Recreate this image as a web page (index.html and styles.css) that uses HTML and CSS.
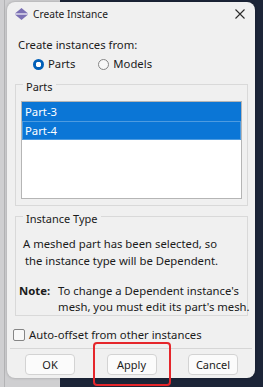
FILE: index.html
```html
<!DOCTYPE html>
<html lang="en">
<head>
  <meta charset="UTF-8">
  <meta name="viewport" content="width=device-width, initial-scale=1.0">
  <title>Create Instance</title>
  <link rel="stylesheet" href="styles.css">
</head>
<body>
  <div class="desktop">
    <div class="strip"></div>
    <div class="dialog">
      <div class="titlebar">
        <svg class="app-icon" width="13" height="12" viewBox="0 0 13 12">
          <path d="M6.5 0 L12.5 5 L0.5 5 Z" fill="#7b70b4"/>
          <path d="M0.5 7 L12.5 7 L6.5 12 Z" fill="#7b70b4"/>
          <rect x="0" y="5.4" width="13" height="1.2" fill="#a9a1d2"/>
        </svg>
        <span class="title">Create Instance</span>
        <svg class="close" width="10" height="10" viewBox="0 0 10 10">
          <path d="M0.5 0.5 L9.5 9.5 M9.5 0.5 L0.5 9.5" stroke="#2b2b2b" stroke-width="1.1"/>
        </svg>
      </div>

      <div class="from-label">Create instances from:</div>
      <div class="radios">
        <label class="radio"><span class="dot checked"></span>Parts</label>
        <label class="radio"><span class="dot"></span>Models</label>
      </div>

      <fieldset class="group parts">
        <legend>Parts</legend>
        <ul class="list">
          <li class="row">Part-3</li>
          <li class="row focus">Part-4</li>
        </ul>
      </fieldset>

      <fieldset class="group type">
        <legend>Instance Type</legend>
        <div class="msg">
          <div>A meshed part has been selected, so</div>
          <div class="indent">the instance type will be Dependent.</div>
        </div>
        <div class="note">
          <b>Note:</b>
          <div>To change a Dependent instance's<br>mesh, you must edit its part's mesh.</div>
        </div>
      </fieldset>

      <label class="check"><span class="box"></span>Auto-offset from other instances</label>
      <div class="sep"></div>

      <div class="buttons">
        <button class="btn">OK</button>
        <button class="btn marked">Apply</button>
        <button class="btn">Cancel</button>
      </div>
    </div>
  </div>
</body>
</html>
```

FILE: styles.css
```css
body {
  margin: 0;
  width: 263px;
  height: 387px;
  overflow: hidden;
}

.desktop {
  position: relative;
  width: 263px;
  height: 387px;
  background: linear-gradient(to right, #cfcfd1 0 60px, #1c2538 60px);
}

.strip {
  position: absolute;
  left: 4px;
  top: 0;
  width: 1px;
  height: 387px;
  background: #b3b3b5;
}

.dialog {
  position: absolute;
  left: 7px;
  top: 2px;
  width: 248px;
  height: 376px;
  background: #f0f0f0;
  border-radius: 8px;
  box-shadow: 0 0 3px rgba(0, 0, 0, 0.25);
  font-family: "Noto Sans", sans-serif;
  font-size: 11.3px;
  color: #1b1b1b;
}

.titlebar {
  height: 24px;
  display: flex;
  align-items: center;
  padding: 0 10px 0 8px;
}

.app-icon {
  margin-right: 5px;
}

.title {
  font-size: 10.2px;
  flex: 1;
}

.from-label {
  margin: 11px 0 0 11px;
  line-height: 16px;
}

.radios {
  display: flex;
  margin: 3px 0 0 26px;
  line-height: 16px;
  gap: 23px;
}

.radio {
  display: flex;
  align-items: center;
  gap: 4px;
}

.dot {
  width: 9px;
  height: 9px;
  border: 1px solid #858585;
  border-radius: 50%;
  background: #f8f8f8;
}

.dot.checked {
  width: 11px;
  height: 11px;
  border: none;
  background: radial-gradient(circle, #ffffff 0 2.6px, #005fb8 3px);
}

.group {
  min-width: 0;
  margin: 0 7px 0 8px;
  border: 1px solid #d9d9d9;
  padding: 0 5px 6px 3px;
}

/* text sits a little below the frame line, as in the Qt dialog */
.group legend {
  margin-left: 4px;
  padding: 6px 3px 0;
  line-height: 14px;
  font-size: 11px;
}

.parts {
  margin-top: 2px;
}

.list {
  list-style: none;
  margin: 7px 0 0 2px;
  padding: 0;
  height: 96px;
  border: 1px solid #b5b5b5;
  background: #ffffff;
}

.row {
  height: 19px;
  line-height: 19px;
  padding-left: 3px;
  background: #0b76d6;
  color: #ffffff;
}

.row.focus {
  height: 17px;
  line-height: 17px;
  border: 1px solid #4d9be0;
  padding-left: 2px;
}

.type {
  margin-top: 0;
  padding: 0;
  padding-left: 3px;
  white-space: nowrap;
}

.msg {
  margin: 9px 0 0 4px;
  line-height: 17px;
}

.indent {
  padding-left: 2px;
}

.note {
  display: flex;
  gap: 8px;
  margin-top: 14px;
  line-height: 16px;
}

.note b {
  font-weight: 700;
}

.check {
  display: flex;
  align-items: center;
  gap: 4px;
  margin: 11px 0 0 6px;
  line-height: 16px;
}

.box {
  width: 10px;
  height: 10px;
  border: 1px solid #858585;
  border-radius: 2px;
  background: #f8f8f8;
}

.sep {
  height: 1px;
  margin: 5px 3px 0;
  background: #d6d6d6;
}

.buttons {
  display: flex;
  justify-content: space-between;
  padding: 0 17px 0 18px;
  margin-top: 5px;
}

.btn {
  position: relative;
  width: 50px;
  height: 21px;
  padding: 0;
  border: 1px solid #d3d3d3;
  border-radius: 4px;
  background: #fbfbfb;
  font-family: "Noto Sans", sans-serif;
  font-size: 11px;
  color: #1b1b1b;
}

.marked::after {
  content: "";
  position: absolute;
  left: -15px;
  top: -13px;
  width: 74px;
  height: 40px;
  border: 2px solid #e5262b;
  border-radius: 4px;
}
```
